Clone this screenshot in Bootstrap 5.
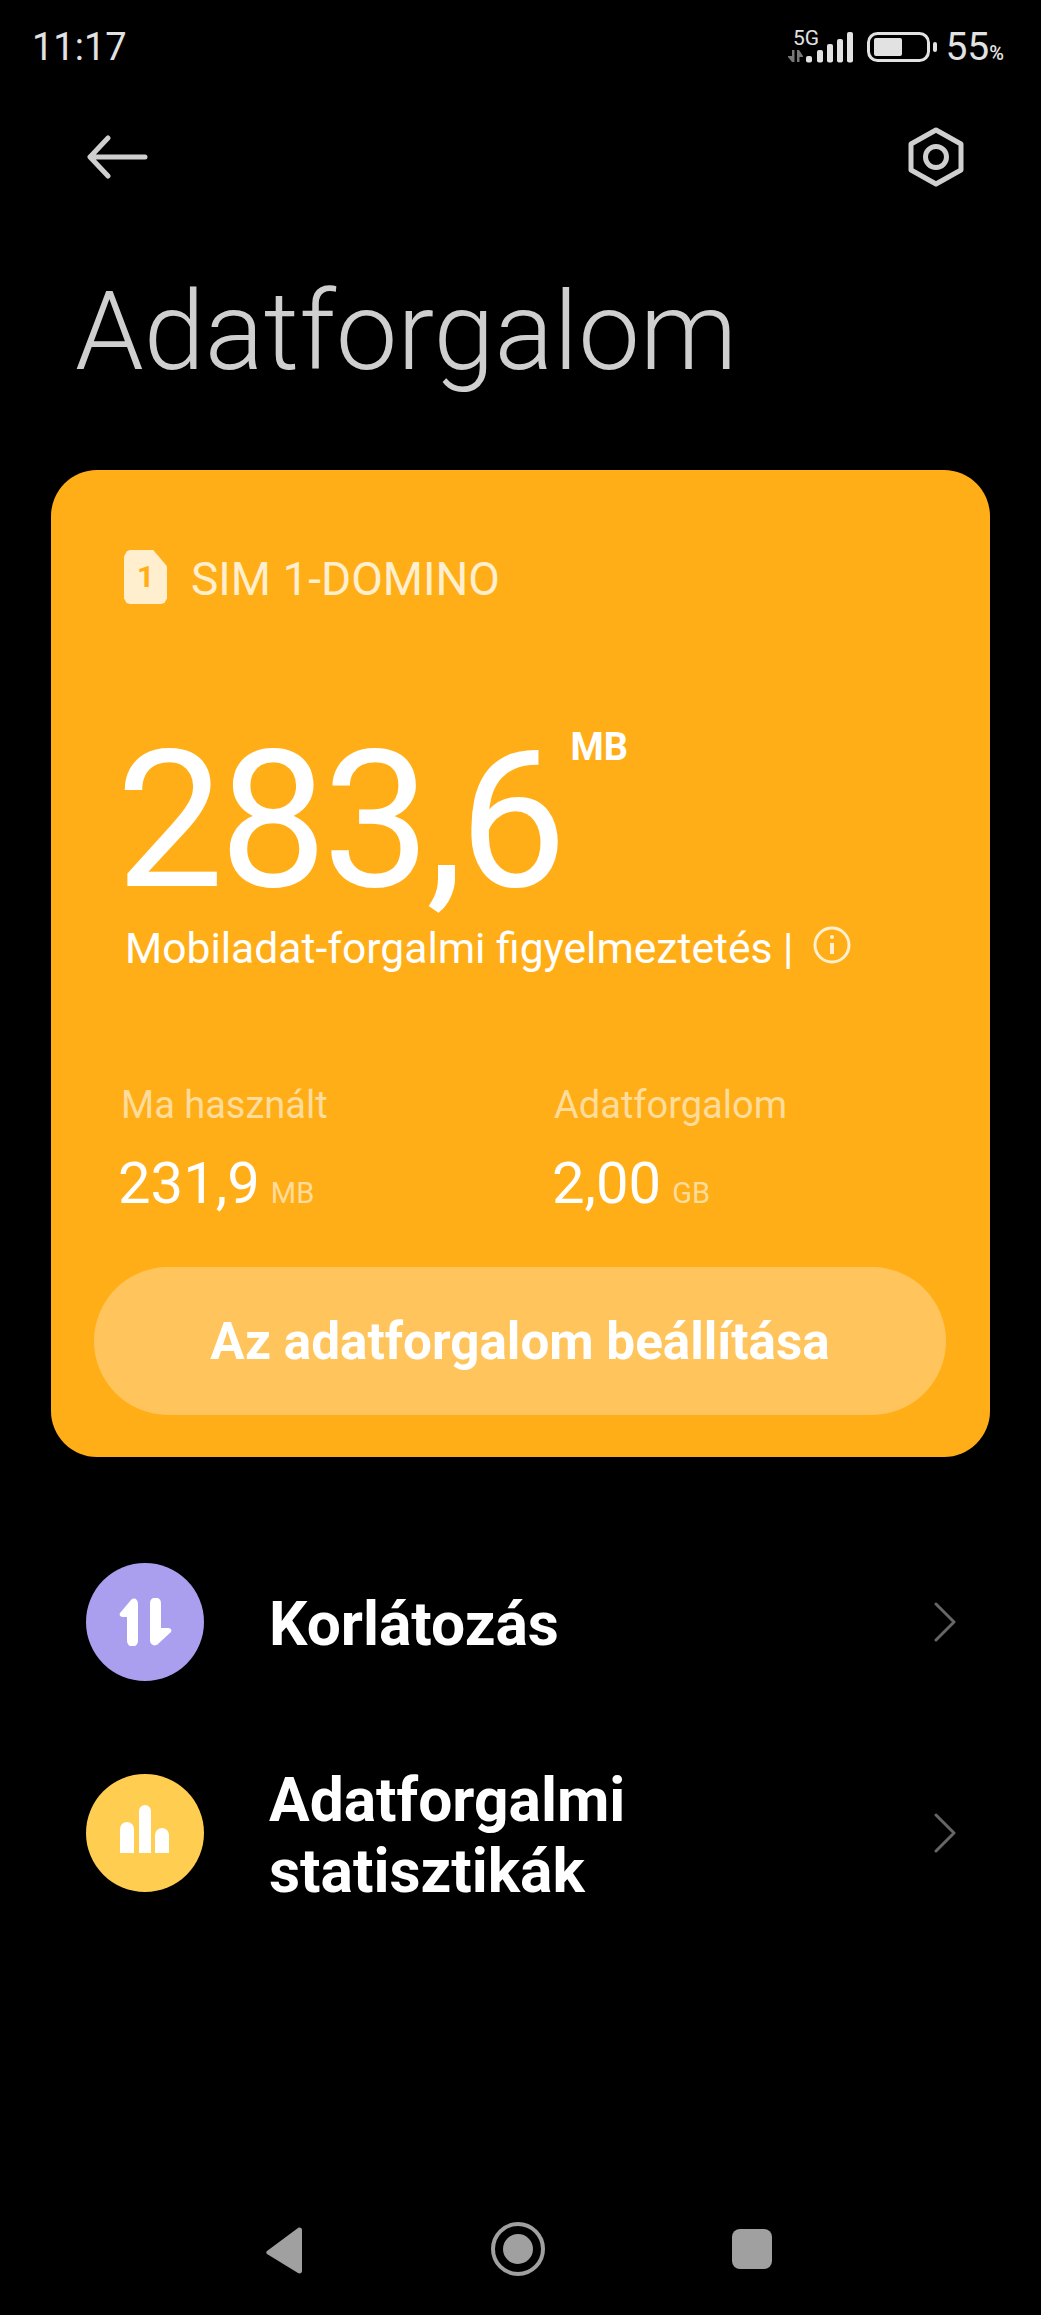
<!DOCTYPE html>
<html lang="hu">
<head>
    <meta charset="UTF-8">
    <meta name="viewport" content="width=device-width, initial-scale=1.0">
    <title>Adatforgalom</title>
    <link rel="stylesheet" href="https://cdn.jsdelivr.net/npm/bootstrap@5.3.0/dist/css/bootstrap.min.css">
    <style>
        body { background: #000; font-family: Roboto, "Liberation Sans", sans-serif; color: #fff; }
        .screen { height: 2315px; }
        .status-row { height: 94px; padding: 0 37px 0 32px; color: #e2e2e2; }
        .status-time { font-size: 38px; line-height: 1; }
        .batt-pct { font-size: 39px; line-height: 1; margin-left: 8px; }
        .batt-pct small { font-size: 20px; font-weight: 500; }
        .tool-row { height: 126px; padding: 0 77px 0 86px; }
        .page-title { font-size: 110px; font-weight: 300; line-height: 140px; color: #cfcfcf; margin: 42px 0 0 75px; }
        .data-card { margin: 68px 51px 0 51px; height: 987px; background: #ffae17; border: 0; border-radius: 46px; padding: 80px 44px 0 43px; color: #fff; }
        .sim-row { padding-left: 30px; gap: 24px; height: 54px; color: #ffefcf; font-size: 46px; }
        .sim-row span { padding-top: 5px; }
        .sim-chip { width: 43px; height: 54px; background: #ffefcf; clip-path: polygon(0 12%, 6% 3%, 14% 0, 68% 0, 100% 30%, 100% 90%, 94% 98%, 86% 100%, 14% 100%, 6% 98%, 0 90%); color: #ffae17; font-size: 30px; font-weight: 700; line-height: 54px; text-align: center; }
        .usage-row { margin: 122px 0 0 22px; align-items: flex-start; }
        .usage-num { font-size: 192px; line-height: 190px; letter-spacing: -4.6px; }
        .usage-unit { font-size: 38px; font-weight: 700; line-height: 1; margin: 2px 0 0 8px; }
        .alert-row { margin: 8px 0 0 31px; font-size: 42.6px; line-height: 48px; gap: 20px; }
        .alert-row svg { margin-bottom: 6px; }
        .stat-row { margin: 111px 0 0 0; }
        .stat-col { width: 434px; flex: none; padding-left: 26px; }
        .stat-label { font-size: 38px; line-height: 44px; color: #ffdc9b; padding-left: 1px; }
        .stat-col + .stat-col .stat-label { padding-left: 0; }
        .stat-value { font-size: 58px; line-height: 70px; margin: 21px 0 0 -2px; }
        .stat-value span { font-size: 29px; color: #ffdc9b; margin-left: 11px; }
        .set-btn { display: block; width: 852px; height: 148px; margin: 39px 0 0 0; padding-top: 9px; border: 0; border-radius: 74px; background: #ffc55c; color: #fff; font-size: 51.2px; font-weight: 700; }
        .set-btn:hover { background: #ffc55c; color: #fff; }
        .menu-list { margin-top: 106px; }
        .menu-item { padding: 0 85px 0 86px; height: 118px; gap: 65px; }
        .menu-item + .menu-item { margin-top: 93px; }
        .menu-text { font-size: 60.5px; font-weight: 700; line-height: 71px; padding-top: 4px; }
        .menu-item + .menu-item .menu-text { padding-top: 5px; }
        .menu-circle { width: 118px; height: 118px; border-radius: 50%; flex: none; }
        .bg-lilac { background: #a99fee; }
        .bg-honey { background: #ffcd50; }
        .nav-keys { height: 115px; position: relative; }
        .nav-keys svg { position: absolute; top: 0; }
    </style>
</head>
<body>
<div class="screen d-flex flex-column">
    <div class="status-row d-flex justify-content-between align-items-center">
        <span class="status-time">11:17</span>
        <div class="d-flex align-items-center">
            <svg width="150" height="48" viewBox="0 -4 150 48">
                <text x="6" y="18" font-family="Roboto" font-size="21" fill="#e2e2e2">5G</text>
                <path d="M5 23h2.500v12H5l-4-5v-1h4zM10 23h2l4 6v1h-3.500v5H10z" fill="#777"/>
                <rect x="19" y="29" width="6" height="6.500" rx="2" fill="#e2e2e2"/>
                <rect x="30" y="23" width="6" height="12.500" rx="2" fill="#e2e2e2"/>
                <rect x="40" y="17" width="6" height="18.500" rx="2" fill="#e2e2e2"/>
                <rect x="50" y="12" width="6" height="23.500" rx="2" fill="#e2e2e2"/>
                <rect x="60" y="5" width="6" height="30.500" rx="2" fill="#e2e2e2"/>
                <rect x="81.500" y="6.500" width="60" height="27" rx="9" fill="none" stroke="#e2e2e2" stroke-width="3"/>
                <rect x="87" y="11" width="28" height="18" rx="2" fill="#e2e2e2"/>
                <rect x="146" y="15" width="4" height="10" rx="2" fill="#e2e2e2"/>
            </svg>
            <span class="batt-pct">55<small>%</small></span>
        </div>
    </div>

    <div class="tool-row d-flex justify-content-between align-items-center">
        <svg width="62" height="44" viewBox="0 0 62 44" fill="none" stroke="#cfcfcf" stroke-width="5" stroke-linecap="round" stroke-linejoin="round"><path d="M59 22H5M22 3 4 22l18 19"/></svg>
        <svg width="56" height="60" viewBox="0 0 56 60" fill="none" stroke="#cfcfcf" stroke-width="5" stroke-linejoin="round"><path d="M28 3 53 17V43L28 57 3 43V17z"/><circle cx="28" cy="30" r="10.500"/></svg>
    </div>

    <h1 class="page-title">Adatforgalom</h1>

    <div class="card data-card">
        <div class="sim-row d-flex align-items-center">
            <div class="sim-chip">1</div>
            <span>SIM 1-DOMINO</span>
        </div>
        <div class="usage-row d-flex">
            <span class="usage-num">283,6</span>
            <span class="usage-unit">MB</span>
        </div>
        <div class="alert-row d-flex align-items-center">
            <span>Mobiladat-forgalmi figyelmeztetés |</span>
            <svg width="38" height="38" viewBox="0 0 38 38" fill="none" stroke="#ffefcf" stroke-width="3"><circle cx="19" cy="19" r="17"/><path d="M19 17v11" stroke-width="4"/><circle cx="19" cy="11" r="2" fill="#ffefcf" stroke="none"/></svg>
        </div>
        <div class="stat-row d-flex">
            <div class="stat-col">
                <div class="stat-label">Ma használt</div>
                <div class="stat-value">231,9<span>MB</span></div>
            </div>
            <div class="stat-col">
                <div class="stat-label">Adatforgalom</div>
                <div class="stat-value">2,00<span>GB</span></div>
            </div>
        </div>
        <button class="btn set-btn">Az adatforgalom beállítása</button>
    </div>

    <div class="menu-list">
        <div class="menu-item d-flex align-items-center">
            <div class="menu-circle bg-lilac d-flex align-items-center justify-content-center">
                <svg width="54" height="48" viewBox="0 0 54 48" fill="#fff"><path d="M20 6v37a5 5 0 0 1-11 0V19H5c-3 0-4-2-3-4L13 2c3-3 7-1 7 4z"/><path d="M32 42V5a5 5 0 0 1 11 0v25h7c3 0 4 2 3 4L40 46c-3 3-8 1-8-4z"/></svg>
            </div>
            <div class="menu-text flex-grow-1">Korlátozás</div>
            <svg width="22" height="40" viewBox="0 0 22 40" fill="none" stroke="#666" stroke-width="3" stroke-linecap="round" stroke-linejoin="round"><path d="M2 2 20 20 2 38"/></svg>
        </div>
        <div class="menu-item d-flex align-items-center">
            <div class="menu-circle bg-honey d-flex align-items-center justify-content-center">
                <svg width="50" height="56" viewBox="0 0 50 56" fill="#fff"><path d="M0 48V24a7 7 0 0 1 14 0v24zM19 48V6a6 6 0 0 1 12 0v42zM35 48V30a7 7 0 0 1 14 0v18z"/></svg>
            </div>
            <div class="menu-text flex-grow-1">Adatforgalmi<br>statisztikák</div>
            <svg width="22" height="40" viewBox="0 0 22 40" fill="none" stroke="#666" stroke-width="3" stroke-linecap="round" stroke-linejoin="round"><path d="M2 2 20 20 2 38"/></svg>
        </div>
    </div>

    <div class="nav-keys mt-auto">
        <svg style="left:266px" width="36" height="115" viewBox="0 0 36 115" fill="#a0a0a0"><path d="M1 51 32 28c2-1 4 0 4 2v41c0 2-2 3-4 2L1 54c-1-1-1-2 0-3z"/></svg>
        <svg style="left:491px" width="54" height="115" viewBox="0 0 54 115"><circle cx="27" cy="49" r="25" fill="none" stroke="#a0a0a0" stroke-width="4"/><circle cx="27" cy="49" r="15" fill="#a0a0a0"/></svg>
        <svg style="left:732px" width="40" height="115" viewBox="0 0 40 115"><rect y="29" width="40" height="40" rx="8" fill="#a0a0a0"/></svg>
    </div>
</div>
<script src="https://cdn.jsdelivr.net/npm/bootstrap@5.3.0/dist/js/bootstrap.bundle.min.js"></script>
</body>
</html>
